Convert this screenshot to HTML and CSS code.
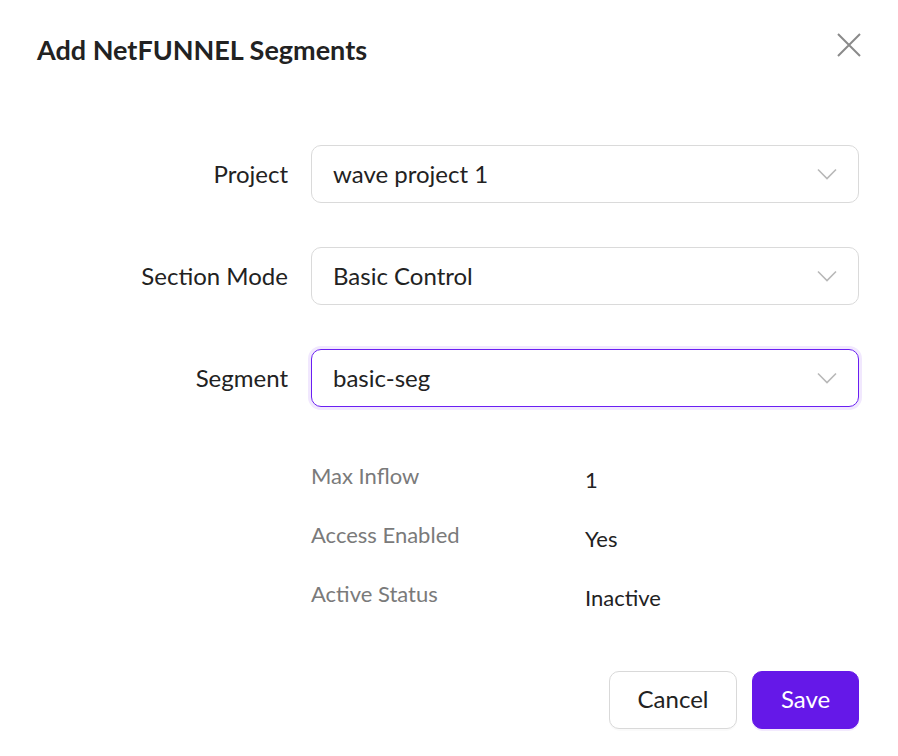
FILE: index.html
```html
<!DOCTYPE html>
<html lang="en">
<head>
<meta charset="utf-8">
<title>Add NetFUNNEL Segments</title>
<link rel="stylesheet" href="styles.css">
</head>
<body>
<div class="modal">
  <header class="modal-head">
    <h1 class="modal-title">Add NetFUNNEL Segments</h1>
    <button class="close-btn" aria-label="Close">
      <svg width="24" height="24" viewBox="0 0 24 24"><path d="M1 1 L23 23 M23 1 L1 23" stroke="#8a8a8a" stroke-width="2" fill="none"/></svg>
    </button>
  </header>

  <div class="form">
    <div class="form-row">
      <label class="form-label">Project</label>
      <div class="select">
        <span class="select-value">wave project 1</span>
        <svg class="chev" width="20" height="12" viewBox="0 0 20 12"><path d="M1 1.5 L10 10.5 L19 1.5" stroke="#b8b8b8" stroke-width="1.6" fill="none"/></svg>
      </div>
    </div>
    <div class="form-row">
      <label class="form-label">Section Mode</label>
      <div class="select">
        <span class="select-value">Basic Control</span>
        <svg class="chev" width="20" height="12" viewBox="0 0 20 12"><path d="M1 1.5 L10 10.5 L19 1.5" stroke="#b8b8b8" stroke-width="1.6" fill="none"/></svg>
      </div>
    </div>
    <div class="form-row">
      <label class="form-label">Segment</label>
      <div class="select is-focused">
        <span class="select-value">basic-seg</span>
        <svg class="chev" width="20" height="12" viewBox="0 0 20 12"><path d="M1 1.5 L10 10.5 L19 1.5" stroke="#b8b8b8" stroke-width="1.6" fill="none"/></svg>
      </div>
    </div>
  </div>

  <dl class="info">
    <div class="info-row"><dt>Max Inflow</dt><dd>1</dd></div>
    <div class="info-row"><dt>Access Enabled</dt><dd>Yes</dd></div>
    <div class="info-row"><dt>Active Status</dt><dd>Inactive</dd></div>
  </dl>

  <footer class="actions">
    <button class="btn btn-cancel">Cancel</button>
    <button class="btn btn-save">Save</button>
  </footer>
</div>
</body>
</html>
```

FILE: styles.css
```css
* { box-sizing: border-box; }
html, body { margin: 0; padding: 0; background: #fff; }
body {
  font-family: Lato, "Noto Sans", sans-serif;
  color: #222;
}
.modal {
  width: 898px;
  height: 756px;
  padding: 28px 39px 0 37px;
  display: flex;
  flex-direction: column;
}
.modal-head {
  display: flex;
  justify-content: space-between;
  align-items: flex-start;
  height: 117px;
}
.modal-title {
  margin: 0;
  font-size: 27px;
  font-weight: 700;
  color: #222;
  line-height: 44px;
}
.close-btn {
  border: 0;
  background: none;
  padding: 0;
  margin: 5px -2px 0 0;
  width: 24px;
  height: 24px;
  cursor: pointer;
}
.close-btn svg { display: block; }

.form {
  display: flex;
  flex-direction: column;
  gap: 44px;
}
.form-row {
  display: flex;
  align-items: center;
  gap: 23px;
}
.form-label {
  width: 251px;
  text-align: right;
  font-size: 24px;
  color: #222;
  position: relative;
  top: -1px;
}
.select {
  flex: 1;
  height: 58px;
  border: 1px solid #dadada;
  border-radius: 10px;
  display: flex;
  align-items: center;
  justify-content: space-between;
  padding: 0 21px 0 21px;
}
.select.is-focused {
  border: 1.5px solid #6a1ff2;
  box-shadow: 0 0 0 3px #f1e8fe;
}
.select-value {
  font-size: 24px;
  color: #222;
  position: relative;
  top: -1px;
}
.chev { display: block; }

.info {
  margin: 53px 0 0 274px;
  padding: 0;
  display: flex;
  flex-direction: column;
  gap: 29px;
}
.info-row {
  display: flex;
  align-items: center;
  height: 30px;
}
.info-row dt {
  width: 274px;
  font-size: 22px;
  color: #7a7a7a;
}
.info-row dd {
  margin: 0;
  font-size: 22px;
  color: #222;
  position: relative;
  top: 4px;
}

.actions {
  margin-top: 63px;
  display: flex;
  justify-content: flex-end;
  gap: 15px;
}
.btn {
  height: 58px;
  border-radius: 10px;
  font-family: inherit;
  font-size: 24px;
  padding: 0 0 3px;
  cursor: pointer;
}
.btn-cancel {
  width: 128px;
  background: #fff;
  border: 1px solid #d9d9d9;
  color: #222;
  box-shadow: 0 2px 0 rgba(0,0,0,0.02);
}
.btn-save {
  width: 107px;
  background: #6518e8;
  border: 1px solid #6518e8;
  color: #fff;
  box-shadow: 0 2px 0 #f3eafe;
}
```
